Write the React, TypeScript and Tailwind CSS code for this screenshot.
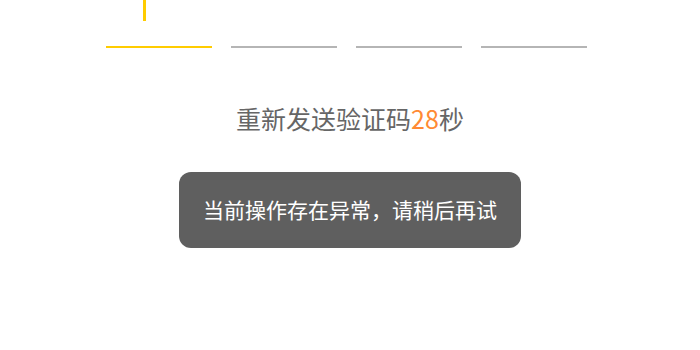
export default function App() {
  const cjk = { fontFamily: '"Noto Sans CJK SC", "Noto Sans", sans-serif' };

  return (
    <div className="w-[700px] h-[350px] bg-white overflow-hidden" style={cjk}>
      {/* code cells */}
      <div className="flex gap-[19px] pl-[106px]">
        <div className="relative w-[106px] h-[48px] border-b-2 border-[#ffcc00]">
          <div className="absolute left-[37px] top-0 w-[3px] h-[21px] bg-[#ffcc00]" />
        </div>
        <div className="w-[106px] h-[48px] border-b-2 border-[#b5b5b5]" />
        <div className="w-[106px] h-[48px] border-b-2 border-[#b5b5b5]" />
        <div className="w-[106px] h-[48px] border-b-2 border-[#b5b5b5]" />
      </div>

      {/* countdown */}
      <div className="mt-[55px] text-center text-[25px] leading-[30px] text-[#666666]">
        重新发送验证码<span className="text-[#ff8a33]">28</span>秒
      </div>

      {/* toast */}
      <div className="mt-[39px] flex justify-center">
        <div className="w-[342px] h-[76px] rounded-[12px] bg-[#5f5f5f] flex items-center justify-center text-[21px] text-white">
          当前操作存在异常，请稍后再试
        </div>
      </div>
    </div>
  );
}
